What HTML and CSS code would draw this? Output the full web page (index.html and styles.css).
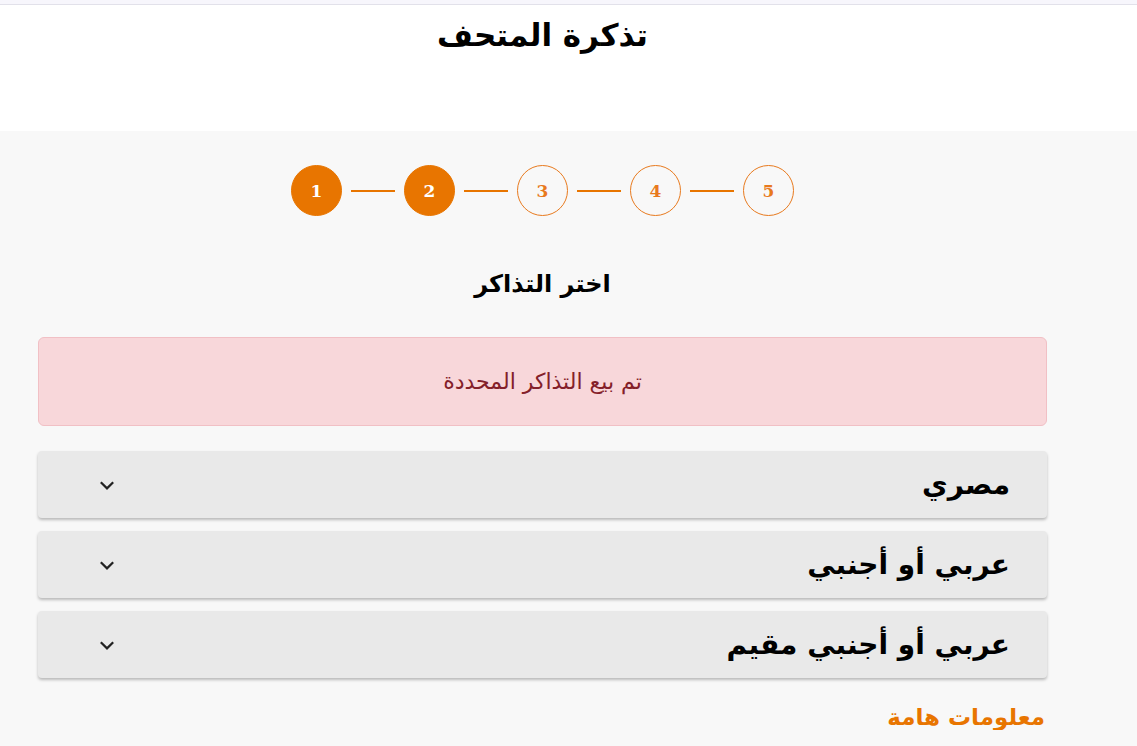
FILE: index.html
```html
<!DOCTYPE html>
<html lang="ar" dir="rtl">
<head>
<meta charset="utf-8">
<title>تذكرة المتحف</title>
<link rel="stylesheet" href="styles.css">
</head>
<body>
<div class="topbar"></div>
<header class="header">
  <h1 class="title">تذكرة المتحف</h1>
</header>
<main class="main">
  <div class="container">
    <ol class="steps" dir="ltr">
      <li class="step done">1</li>
      <li class="line"></li>
      <li class="step done">2</li>
      <li class="line"></li>
      <li class="step">3</li>
      <li class="line"></li>
      <li class="step">4</li>
      <li class="line"></li>
      <li class="step">5</li>
    </ol>
    <h2 class="section-title">اختر التذاكر</h2>
    <div class="alert">تم بيع التذاكر المحددة</div>
    <div class="accordion">
      <div class="acc-item"><span class="acc-label">مصري</span><svg class="chev" viewBox="0 0 16 16" width="18" height="18"><path d="M2.5 5.5 L8 11 L13.5 5.5" fill="none" stroke="#222" stroke-width="2"/></svg></div>
      <div class="acc-item"><span class="acc-label">عربي أو أجنبي</span><svg class="chev" viewBox="0 0 16 16" width="18" height="18"><path d="M2.5 5.5 L8 11 L13.5 5.5" fill="none" stroke="#222" stroke-width="2"/></svg></div>
      <div class="acc-item"><span class="acc-label">عربي أو أجنبي مقيم</span><svg class="chev" viewBox="0 0 16 16" width="18" height="18"><path d="M2.5 5.5 L8 11 L13.5 5.5" fill="none" stroke="#222" stroke-width="2"/></svg></div>
    </div>
    <h3 class="info-title">معلومات هامة</h3>
  </div>
</main>
</body>
</html>
```
FILE: styles.css
```css
* { box-sizing: border-box; }
html, body { margin: 0; padding: 0; }
body {
  font-family: "DejaVu Sans", sans-serif;
  background: #f8f8f8;
  color: #000;
  overflow: hidden;
}
.topbar {
  height: 5px;
  background: #f7f6fc;
  border-bottom: 1px solid #e2e1ea;
}
.header {
  background: #fff;
  height: 126px;
  display: flex;
  justify-content: center;
  padding-right: 52px;
}
.title {
  margin: 8px 0 0;
  font-size: 31px;
  font-weight: bold;
  line-height: 44px;
}
.main { padding: 34px 90px 0 38px; }
.container { width: 1009px; }
.steps {
  list-style: none;
  margin: 0;
  padding: 0;
  display: flex;
  justify-content: center;
  align-items: center;
  gap: 9px;
}
.step {
  width: 51px;
  height: 51px;
  border-radius: 50%;
  border: 1px solid #e87a1e;
  color: #e87a1e;
  display: flex;
  align-items: center;
  justify-content: center;
  font-family: "DejaVu Serif", serif;
  font-weight: bold;
  font-size: 17px;
}
.step.done { background: #e87500; border-color: #e87500; color: #fff; }
.line { width: 44px; height: 2px; background: #e87500; }
.section-title {
  text-align: center;
  font-size: 24px;
  font-weight: bold;
  margin: 50px 0 0;
  line-height: 36px;
}
.alert {
  margin-top: 35px;
  height: 89px;
  background: #f8d7da;
  border: 1px solid #f1c0c5;
  border-radius: 6px;
  color: #842029;
  font-size: 22px;
  display: flex;
  align-items: center;
  justify-content: center;
}
.accordion {
  margin-top: 25px;
  display: flex;
  flex-direction: column;
  gap: 13px;
}
.acc-item {
  height: 67px;
  background: #e9e9e9;
  border-radius: 4px;
  box-shadow: 0 2px 3px rgba(0,0,0,0.25);
  display: flex;
  align-items: center;
  justify-content: space-between;
  padding: 0 37px 0 0;
}
.acc-label { font-size: 28px; font-weight: bold; }
.chev { margin-left: 60px; }
.info-title {
  color: #e87500;
  font-size: 23px;
  font-weight: bold;
  margin: 26px 2px 0 0;
}
```
